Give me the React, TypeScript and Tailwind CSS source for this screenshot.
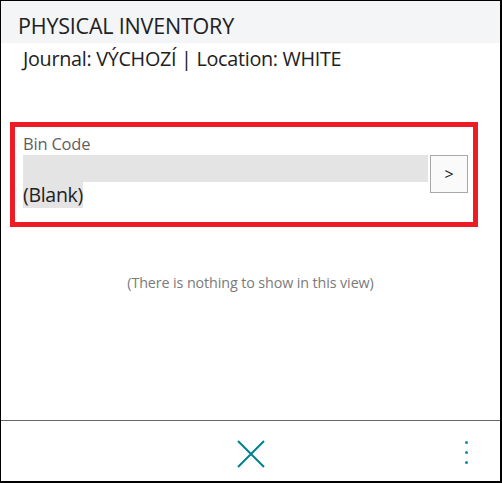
import { useState } from "react";

export default function App() {
  const [binCode] = useState("");

  return (
    <div
      className="w-[502px] h-[483px] flex flex-col bg-white border-l border-t border-r-2 border-b-2 border-black text-[#212121]"
      style={{ fontFamily: '"Open Sans", "Noto Sans", sans-serif' }}
    >
      {/* Title bar */}
      <div className="h-[42px] shrink-0 bg-[#f4f5f7] pl-[17px] flex items-center pt-[7px]">
        <h1 className="text-[21.5px] leading-none tracking-[-0.2px]">PHYSICAL INVENTORY</h1>
      </div>

      <div className="pl-[22px] pt-[3px] text-[19.8px] leading-[26px] tracking-[-0.3px]">
        Journal: VÝCHOZÍ | Location: WHITE
      </div>

      {/* Bin code field */}
      <div className="ml-[9px] mt-[50px] w-[468px] h-[105px] border-[5px] border-[#ed1c24] pl-[8px] pr-[5px] pt-[6px]">
        <label className="block text-[16.5px] leading-[22px] text-[#5f5f5f] tracking-[-0.2px]">Bin Code</label>
        <div className="flex gap-[2px]">
          <div className="flex-1">
            <div className="h-[27px] bg-[#e4e4e5]">{binCode}</div>
            <span className="inline-block bg-[#e4e4e5] text-[19.5px] leading-[26px] tracking-[-0.3px]">(Blank)</span>
          </div>
          <button className="w-[38px] h-[38px] border border-[#a8a8a8] bg-[#fafafa] flex items-center justify-center text-[16px] text-[#222]">
            &gt;
          </button>
        </div>
      </div>

      <div className="mt-[46px] text-center text-[14.3px] leading-[20px] text-[#7a7a7a] tracking-[-0.1px]">
        (There is nothing to show in this view)
      </div>

      <div className="flex-1" />

      {/* Footer actions */}
      <div className="h-[61px] shrink-0 border-t border-[#666] relative flex items-center justify-center">
        <svg width="28" height="28" viewBox="0 0 28 28" className="mt-[5px]">
          <path d="M1 1 L27 27 M27 1 L1 27" stroke="#00808c" strokeWidth="2" />
        </svg>
        <div className="absolute right-[32px] top-[20px] flex flex-col gap-[7px]">
          <span className="block w-[3px] h-[3px] rounded-full bg-[#1688a8]" />
          <span className="block w-[3px] h-[3px] rounded-full bg-[#1688a8]" />
          <span className="block w-[3px] h-[3px] rounded-full bg-[#1688a8]" />
        </div>
      </div>
    </div>
  );
}
